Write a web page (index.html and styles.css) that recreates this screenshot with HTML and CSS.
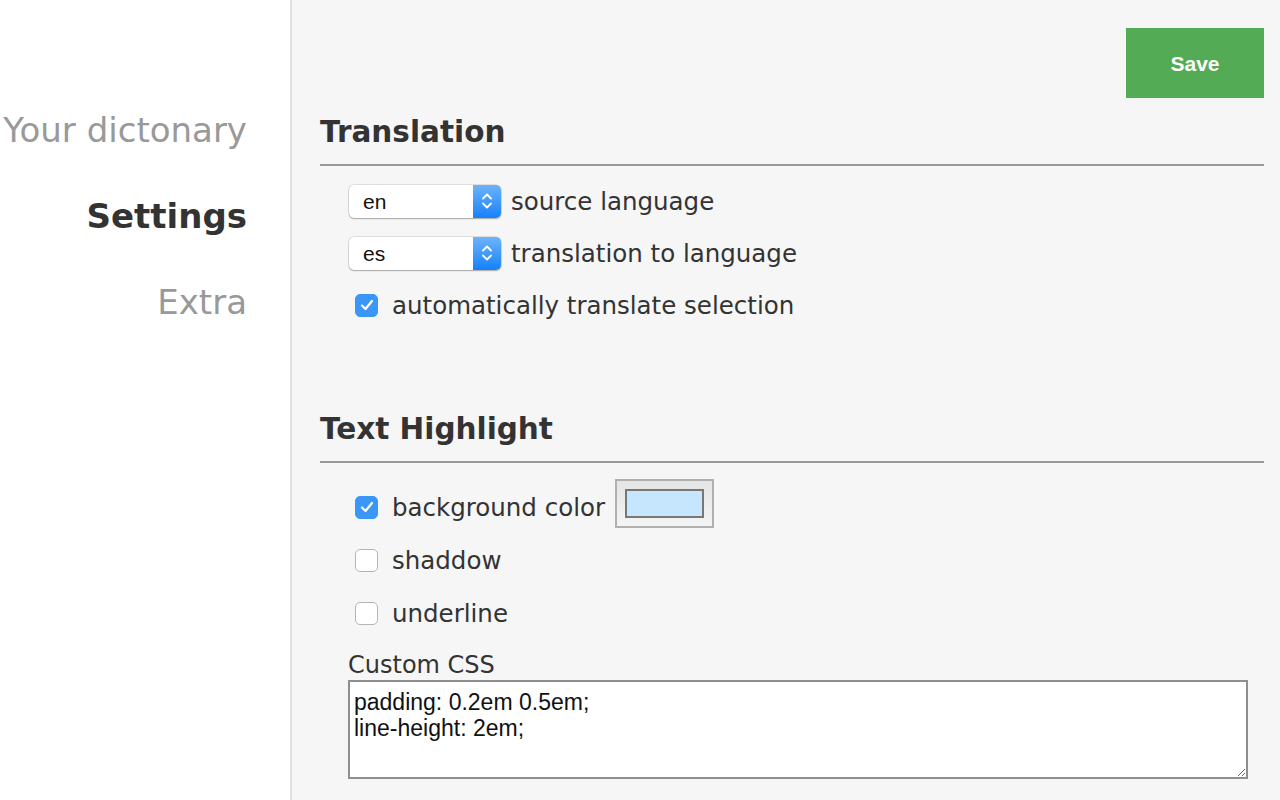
FILE: index.html
```html
<!DOCTYPE html>
<html>
<head>
<meta charset="utf-8">
<link rel="stylesheet" href="styles.css">
</head>
<body>
<nav class="sidebar">
  <a class="nav-item">Your dictonary</a>
  <a class="nav-item active">Settings</a>
  <a class="nav-item">Extra</a>
</nav>
<main class="main">
  <div class="toolbar"><button class="save">Save</button></div>

  <section class="section">
    <h2 class="section-title">Translation</h2>
    <div class="rows">
      <div class="row">
        <div class="select"><span class="select-value">en</span><span class="select-arrow"><svg width="14" height="22" viewBox="0 0 14 22"><path d="M3 8.5 L7 4.5 L11 8.5 M3 13.5 L7 17.5 L11 13.5" fill="none" stroke="#fff" stroke-width="1.8" stroke-linecap="round" stroke-linejoin="round"/></svg></span></div>
        <span class="label">source language</span>
      </div>
      <div class="row">
        <div class="select"><span class="select-value">es</span><span class="select-arrow"><svg width="14" height="22" viewBox="0 0 14 22"><path d="M3 8.5 L7 4.5 L11 8.5 M3 13.5 L7 17.5 L11 13.5" fill="none" stroke="#fff" stroke-width="1.8" stroke-linecap="round" stroke-linejoin="round"/></svg></span></div>
        <span class="label">translation to language</span>
      </div>
      <div class="row">
        <span class="checkbox checked"><svg width="14" height="12" viewBox="0 0 14 12"><path d="M2 6.5 L5.5 10 L12 2" fill="none" stroke="#fff" stroke-width="2.2" stroke-linecap="round" stroke-linejoin="round"/></svg></span>
        <span class="label">automatically translate selection</span>
      </div>
    </div>
  </section>

  <section class="section second">
    <h2 class="section-title">Text Highlight</h2>
    <div class="rows">
      <div class="row">
        <span class="checkbox checked"><svg width="14" height="12" viewBox="0 0 14 12"><path d="M2 6.5 L5.5 10 L12 2" fill="none" stroke="#fff" stroke-width="2.2" stroke-linecap="round" stroke-linejoin="round"/></svg></span>
        <span class="label">background color</span>
        <span class="swatch"><span class="swatch-color"></span></span>
      </div>
      <div class="row">
        <span class="checkbox"></span>
        <span class="label">shaddow</span>
      </div>
      <div class="row">
        <span class="checkbox"></span>
        <span class="label">underline</span>
      </div>
    </div>
    <div class="custom">
      <div class="custom-label">Custom CSS</div>
      <textarea class="css-input">padding: 0.2em 0.5em;
line-height: 2em;</textarea>
    </div>
  </section>
</main>
</body>
</html>
```

FILE: styles.css
```css
html, body {
  margin: 0;
  padding: 0;
  height: 100%;
}
body {
  display: flex;
  font-family: "DejaVu Sans", Verdana, sans-serif;
  color: #333;
  background: #f6f6f6;
  overflow: hidden;
}
.sidebar {
  width: 292px;
  flex: none;
  background: #fff;
  border-right: 2px solid #e0e0e0;
  display: flex;
  flex-direction: column;
  align-items: flex-end;
  padding: 110px 43px 0 0;
  box-sizing: border-box;
  gap: 46px;
}
.nav-item {
  font-size: 34px;
  line-height: 40px;
  color: #999;
}
.nav-item.active {
  font-weight: bold;
  color: #333;
}
.main {
  flex: 1;
  padding: 28px 16px 0 28px;
  min-width: 0;
}
.toolbar {
  display: flex;
  justify-content: flex-end;
}
.save {
  width: 138px;
  height: 70px;
  border: none;
  background: #53ab56;
  color: #fff;
  font-family: "Liberation Sans", Arial, sans-serif;
  font-weight: bold;
  font-size: 21px;
  padding: 2px 0 0;
}
.section-title {
  margin: 16px 0 0;
  font-size: 29.5px;
  line-height: 36px;
  font-weight: bold;
  padding-bottom: 14px;
  border-bottom: 2px solid #999;
}
.second .section-title {
  margin-top: 89px;
}
.rows {
  display: flex;
  flex-direction: column;
  gap: 18px;
  padding: 18px 0 0 29px;
}
.second .rows {
  padding-top: 27px;
  gap: 19px;
}
.row {
  display: flex;
  align-items: center;
  height: 34px;
}
.label {
  font-size: 24.5px;
}
.select {
  width: 152px;
  height: 33px;
  box-sizing: border-box;
  display: flex;
  background: #fff;
  border-radius: 5px;
  box-shadow: 0 0 0 0.5px rgba(0,0,0,0.18), 0 1px 1.5px rgba(0,0,0,0.25);
  margin-right: 10px;
  overflow: hidden;
}
.select-value {
  flex: 1;
  font-family: "Liberation Sans", Arial, sans-serif;
  font-size: 21px;
  line-height: 33px;
  color: #111;
  padding-left: 14px;
}
.select-arrow {
  width: 28px;
  background: linear-gradient(#6db4fb, #1581fb);
  display: flex;
  align-items: center;
  justify-content: center;
}
.checkbox {
  width: 23px;
  height: 23px;
  box-sizing: border-box;
  border-radius: 5px;
  background: #fff;
  border: 1px solid #b5b5b5;
  margin: 0 14px 0 6px;
  display: flex;
  align-items: center;
  justify-content: center;
}
.checkbox.checked {
  background: #3a97f8;
  border-color: #3a97f8;
}
.swatch {
  width: 99px;
  height: 49px;
  box-sizing: border-box;
  border: 2px solid #b0b0b0;
  background: linear-gradient(#e4e4e4, #f4f4f4);
  margin-left: 10px;
  margin-top: -7px;
  padding: 8px;
  display: flex;
}
.swatch-color {
  flex: 1;
  background: #c5e6fd;
  border: 2px solid #777;
}
.custom {
  padding: 20px 0 0 28px;
}
.custom-label {
  font-size: 24px;
  line-height: 30px;
}
.css-input {
  display: block;
  width: 900px;
  height: 99px;
  box-sizing: border-box;
  margin-top: 0;
  border: 2px solid #8e8e8e;
  background: #fff;
  font-family: "Liberation Sans", Arial, sans-serif;
  font-size: 23px;
  line-height: 26px;
  padding: 7px 4px 4px;
  color: #111;
  resize: both;
  outline: none;
}
```
